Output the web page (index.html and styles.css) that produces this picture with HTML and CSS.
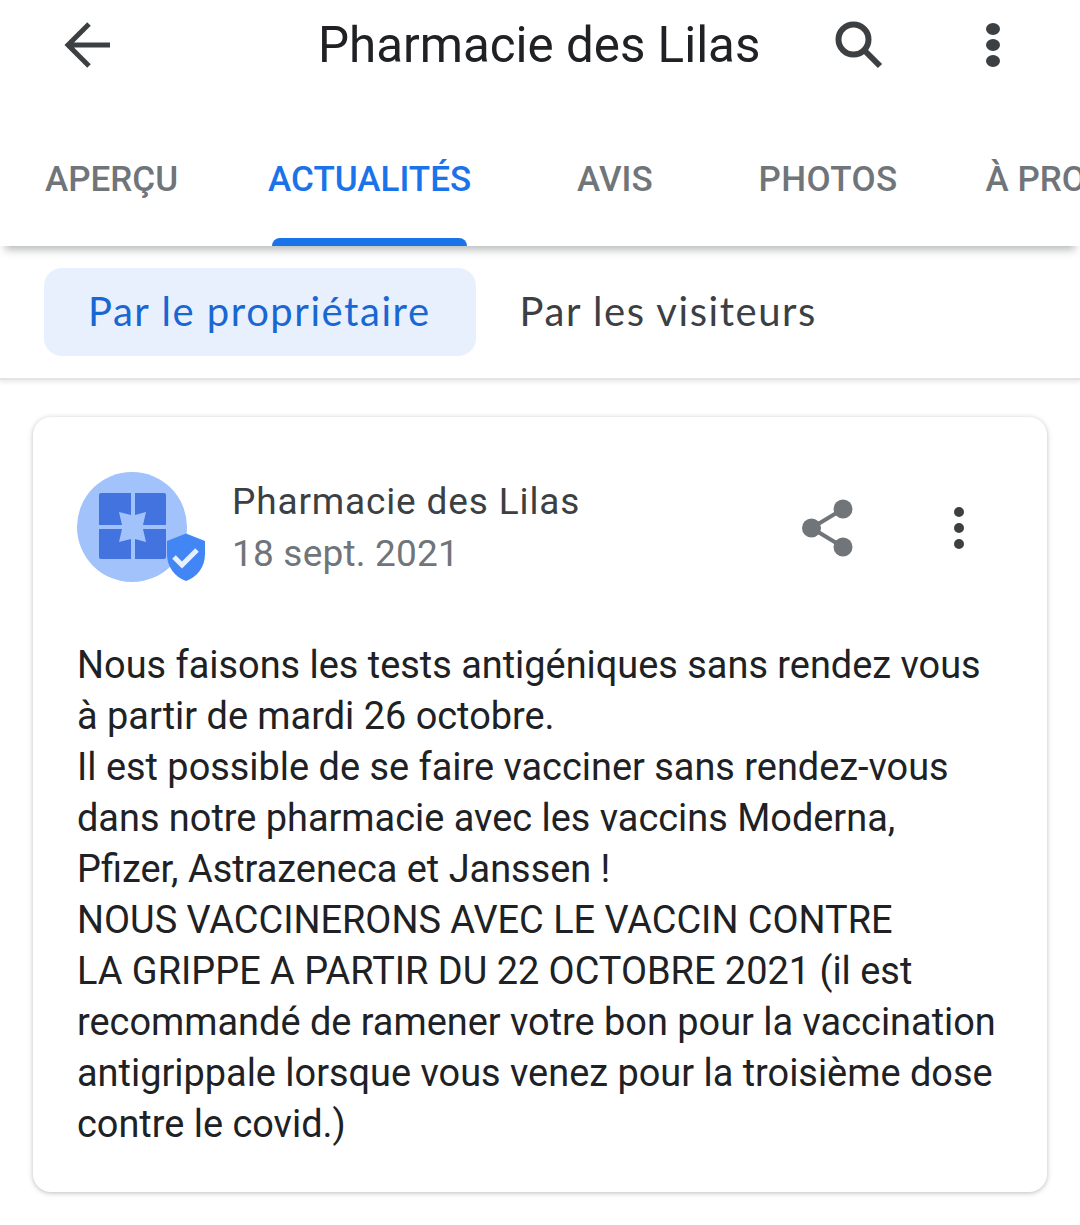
FILE: index.html
```html
<!DOCTYPE html>
<html lang="fr">
<head>
    <meta charset="UTF-8">
    <title>Pharmacie des Lilas</title>
    <meta name="viewport" content="width=device-width, initial-scale=1.0">
    <link rel="stylesheet" href="styles.css">
</head>
<body>
    <header class="topbar">
        <svg class="back-icon" viewBox="0 0 48 48" width="48" height="48"><path d="M46 24H6M25 3L4 24l21 21" fill="none" stroke="#3c4043" stroke-width="5"/></svg>
        <h1 class="title">Pharmacie des Lilas</h1>
        <svg class="search-icon" viewBox="0 0 48 48" width="48" height="48"><circle cx="18.500" cy="18.500" r="15"/><path d="M29 29l16 16"/></svg>
        <div class="dots dots-top"><span></span><span></span><span></span></div>
    </header>

    <nav class="tabs">
        <a class="tab tab-apercu">APERÇU</a>
        <a class="tab tab-active">ACTUALITÉS</a>
        <a class="tab tab-avis">AVIS</a>
        <a class="tab tab-photos">PHOTOS</a>
        <a class="tab tab-apropos">À PRO</a>
    </nav>

    <div class="filters">
        <button class="chip chip-active">Par le propriétaire</button>
        <button class="chip">Par les visiteurs</button>
    </div>

    <main class="feed">
        <article class="card">
            <div class="card-head">
                <div class="avatar">
                    <svg viewBox="0 0 130 110" width="130" height="110">
                        <circle cx="55" cy="55" r="55" fill="#a1c2fa"/>
                        <path fill="#4273de" d="M24 21h30v22l-12-3 3 13H22V23a2 2 0 0 1 2-2zM58 21h29a2 2 0 0 1 2 2v30H66l3-13-11 3zM22 57h23l-3 13 12-3v20H24a2 2 0 0 1-2-2zM66 57h23v28a2 2 0 0 1-2 2H58V67l11 3z"/>
                        <path fill="#4285f4" d="M109 61.500l19 7.500v13c0 13-8 23-19 27-11-4-19-14-19-27V69z"/>
                        <path fill="none" stroke="#e8f0fe" stroke-width="5" d="M97 85l8 8 15-15"/>
                    </svg>
                </div>
                <div class="meta">
                    <div class="meta-name">Pharmacie des Lilas</div>
                    <div class="meta-date">18 sept. 2021</div>
                </div>
                <svg class="share-icon" viewBox="0 0 52 58" width="52" height="58">
                    <circle cx="41" cy="10" r="9.500"/><circle cx="9.500" cy="29" r="9.500"/><circle cx="41" cy="48" r="9.500"/>
                    <path d="M41 10L9.500 29 41 48" fill="none" stroke="#70757a" stroke-width="4"/>
                </svg>
                <div class="dots dots-card"><span></span><span></span><span></span></div>
            </div>
            <p class="post">Nous faisons les tests antigéniques sans rendez vous<br>à partir de mardi 26 octobre.<br>Il est possible de se faire vacciner sans rendez-vous<br>dans notre pharmacie avec les vaccins Moderna,<br>Pfizer, Astrazeneca et Janssen !<br>NOUS VACCINERONS AVEC LE VACCIN CONTRE<br>LA GRIPPE A PARTIR DU 22 OCTOBRE 2021 (il est<br>recommandé de ramener votre bon pour la vaccination<br>antigrippale lorsque vous venez pour la troisième dose<br>contre le covid.)</p>
        </article>
    </main>
</body>
</html>
```

FILE: styles.css
```css
* { box-sizing: border-box; }
html, body { margin: 0; padding: 0; }
body {
    width: 1080px;
    height: 1225px;
    overflow: hidden;
    background: #fff;
    font-family: Roboto, sans-serif;
    color: #202124;
}

.topbar {
    display: flex;
    align-items: center;
    height: 90px;
}
.back-icon { margin-left: 64px; flex: none; }
.title {
    margin: 0 0 0 206px;
    font-size: 49.3px;
    font-weight: 400;
    line-height: 90px;
    white-space: nowrap;
    flex: none;
    width: 442px;
}
.search-icon { margin-left: 75px; fill: none; stroke: #3c4043; stroke-width: 6; flex: none; }
.dots { display: flex; flex-direction: column; flex: none; }
.dots span { display: block; border-radius: 50%; background: #3c4043; }
.dots-top { gap: 4px; margin-left: 103px; }
.dots-top span { width: 14px; height: 12px; }
.dots-card { gap: 6px; margin-left: 100px; margin-top: 2px; }
.dots-card span { width: 10px; height: 10px; }

.tabs {
    display: flex;
    height: 156px;
    padding-top: 40px;
    overflow: hidden;
    position: relative;
    background: #fff;
    white-space: nowrap;
    box-shadow: 0 9px 8px -5px rgba(60, 64, 67, .35);
}
.tab {
    font-size: 35px;
    font-weight: 500;
    line-height: 100px;
    height: 116px;
    color: #70757a;
    flex: none;
}
.tab-apercu { margin-left: 45px; }
.tab-active {
    margin-left: 90px;
    color: #1a73e8;
    position: relative;
}
.tab-active::after {
    content: "";
    position: absolute;
    left: 4px;
    right: 4px;
    bottom: 0;
    height: 8px;
    background: #1a73e8;
    border-radius: 8px 8px 0 0;
}
.tab-avis { margin-left: 106px; }
.tab-photos { margin-left: 106px; letter-spacing: .4px; }
.tab-apropos { margin-left: 88px; }

.filters {
    display: flex;
    align-items: flex-start;
    height: 134px;
    padding: 22px 0 0 44px;
    border-bottom: 2px solid #e4e4e4;
    box-shadow: 0 2px 4px rgba(60, 64, 67, .12);
}
.chip {
    height: 88px;
    padding: 0 45px 2px 44px;
    border: none;
    background: transparent;
    border-radius: 18px;
    font-family: Lato, sans-serif;
    font-size: 40px;
    letter-spacing: 1.55px;
    color: #3c4043;
}
.chip-active {
    background: #e8f0fd;
    color: #1967d2;
}

.feed { padding: 37px 33px 0; }
.card {
    height: 775px;
    padding: 54px 44px 0;
    background: #fff;
    border-radius: 18px;
    box-shadow: 0 1px 5px rgba(60, 64, 67, .35);
}
.card-head { display: flex; align-items: center; height: 112px; }
.avatar { flex: none; width: 155px; height: 110px; }
.avatar svg { display: block; }
.meta { flex: none; width: 569px; margin-top: 2px; }
.meta-name { font-size: 37px; line-height: 52px; letter-spacing: .85px; color: #3c4043; }
.meta-date { font-size: 37px; line-height: 52px; letter-spacing: .2px; color: #70757a; }
.share-icon { flex: none; fill: #70757a; margin: 2px 0 0 1px; }
.post {
    margin: 57px 0 0;
    font-size: 37.9px;
    line-height: 51px;
    white-space: nowrap;
    color: #202124;
}
```
